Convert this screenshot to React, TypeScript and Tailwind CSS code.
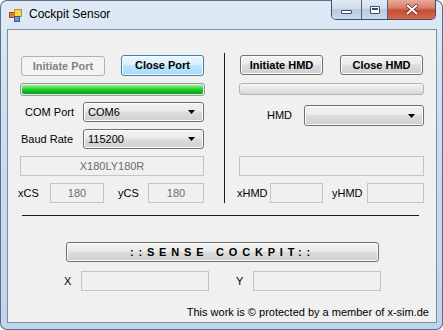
import type { ReactNode } from 'react';

const btnBase =
  'flex items-center justify-center rounded-[3px] border text-[11px] font-bold leading-none shrink-0';
const btnNormal =
  'border-[#707070] bg-[linear-gradient(#f2f2f2,#ebebeb_45%,#dddddd_50%,#cfcfcf)] text-black shadow-[inset_0_0_0_1px_#fcfcfc]';
const btnFocus =
  'border-[#3c7fb1] bg-[linear-gradient(#eaf6fd,#d9f0fc_45%,#bee6fd_50%,#a7d9f5)] text-black shadow-[inset_0_0_0_1px_#f8fcfe]';
const btnDisabled = 'border-[#adb2b5] bg-[#f4f4f4] text-[#838383]';

function Btn({ children, className }: { children: ReactNode; className: string }) {
  return <div className={`${btnBase} ${className}`}>{children}</div>;
}

function Combo({ value, className }: { value?: string; className: string }) {
  return (
    <div
      className={`flex items-center justify-between rounded-[3px] border border-[#707070] bg-[linear-gradient(#f2f2f2,#ebebeb_45%,#dddddd_50%,#cfcfcf)] pl-[4px] pr-[8px] text-[11px] text-black shadow-[inset_0_0_0_1px_#fcfcfc] ${className}`}
    >
      <span>{value}</span>
      <svg width="7" height="4" viewBox="0 0 7 4">
        <path d="M0 0h7L3.5 4z" fill="#000" />
      </svg>
    </div>
  );
}

function TextBox({ value, className }: { value?: string; className: string }) {
  return (
    <div
      className={`flex items-center justify-center border border-[#c4c4c4] bg-[#f0f0f0] text-[11px] text-[#6d6d6d] ${className}`}
    >
      {value}
    </div>
  );
}

function WinIcon() {
  return (
    <svg width="13" height="13" viewBox="0 0 13 13">
      <rect x="0.5" y="3.5" width="5" height="5" fill="#e8743b" stroke="#a64a1c" />
      <rect x="5.5" y="0.5" width="7" height="7" fill="#f7d54a" stroke="#b8901c" />
      <rect x="5.5" y="7.5" width="5" height="5" fill="#6e8fd6" stroke="#3a5b9c" />
    </svg>
  );
}

export default function App() {
  return (
    <div className="relative w-[443px] h-[330px] overflow-hidden rounded-[7px] bg-[linear-gradient(180deg,#dfeaf6,#cddef0_35%,#c0d4eb)] shadow-[inset_0_0_0_1px_#5d6f86] [font-family:'Liberation_Sans',Arial,sans-serif]">
      {/* title bar */}
      <div className="flex h-[29px] items-start">
        <div className="ml-[9px] mt-[9px]">
          <WinIcon />
        </div>
        <span className="ml-[7px] mt-[7px] text-[12px] leading-[15px] text-black">Cockpit Sensor</span>
        <div className="ml-auto mr-[7px] flex h-[20px] overflow-hidden rounded-b-[5px] border border-t-0 border-[#3f4d60]">
          <div className="flex w-[30px] items-center justify-center border-r border-[#52637a] bg-[linear-gradient(#e2ebf5,#cfdcec_45%,#b8cbe2_50%,#c9d9ec)]">
            <div className="mt-[5px] h-[4px] w-[11px] rounded-[1px] border border-[#3c4b5e] bg-white" />
          </div>
          <div className="flex w-[26px] items-center justify-center border-r border-[#52637a] bg-[linear-gradient(#e2ebf5,#cfdcec_45%,#b8cbe2_50%,#c9d9ec)]">
            <div className="h-[8px] w-[10px] rounded-[1px] border border-[#3c4b5e] bg-white p-[1px]">
              <div className="h-full w-full border-t-[2px] border-[#3c4b5e] bg-white" />
            </div>
          </div>
          <div className="flex w-[47px] items-center justify-center bg-[linear-gradient(#e9a99a,#d9826d_40%,#c74d36_55%,#d66a4e)]">
            <svg width="12" height="11" viewBox="0 0 12 11">
              <path d="M1.5 1.5l9 8M10.5 1.5l-9 8" stroke="#5a2418" strokeWidth="3.4" strokeLinecap="round" />
              <path d="M1.5 1.5l9 8M10.5 1.5l-9 8" stroke="#fff" strokeWidth="2" strokeLinecap="round" />
            </svg>
          </div>
        </div>
      </div>

      {/* client area */}
      <div className="ml-[7px] mr-[6px] h-[294px] border border-[#7a8ea6] bg-[#f0f0f0] text-[11px] text-black">
        <div className="flex pl-[12px] pt-[23px]">
          {/* left column */}
          <div className="w-[185px] pt-[2px]">
            <div className="flex h-[21px]">
              <Btn className={`${btnDisabled} ml-[1px] mt-[1px] h-[20px] w-[84px]`}>Initiate Port</Btn>
              <Btn className={`${btnFocus} ml-auto mr-[1px] h-[21px] w-[83px]`}>Close Port</Btn>
            </div>
            <div className="mt-[7px] h-[13px] rounded-[3px] border border-[#9a9a9a] bg-[#e6e6e6] p-[1px]">
              <div className="h-full w-full rounded-[2px] bg-[linear-gradient(#a6efa6,#3bd83b_35%,#0fc21f_65%,#0b9e1c)]" />
            </div>
            <div className="mt-[6px] flex h-[20px] items-center">
              <span className="w-[54px] text-right">COM Port</span>
              <Combo value="COM6" className="ml-[9px] h-[20px] w-[121px]" />
            </div>
            <div className="mt-[7px] flex h-[20px] items-center">
              <span className="w-[53px] text-right">Baud Rate</span>
              <Combo value="115200" className="ml-[10px] h-[20px] w-[121px]" />
            </div>
            <TextBox value="X180LY180R" className="mt-[7px] h-[20px] w-[184px]" />
            <div className="mt-[7px] flex h-[20px] items-center">
              <span className="-ml-[2px] w-[32px]">xCS</span>
              <TextBox value="180" className="h-[20px] w-[54px]" />
              <span className="ml-[14px] w-[30px]">yCS</span>
              <TextBox value="180" className="h-[20px] w-[56px]" />
            </div>
          </div>

          {/* separator */}
          <div className="ml-[19px] h-[150px] w-px bg-[#1a1a1a]" />

          {/* right column */}
          <div className="ml-[12px] w-[187px] pt-[2px]">
            <div className="flex h-[21px]">
              <Btn className={`${btnNormal} ml-[3px] h-[20px] w-[83px]`}>Initiate HMD</Btn>
              <Btn className={`${btnNormal} ml-[17px] h-[20px] w-[83px]`}>Close HMD</Btn>
            </div>
            <div className="ml-[2px] mt-[7px] h-[12px] w-[185px] rounded-[3px] border border-[#b2b2b2] bg-[linear-gradient(#f5f5f5,#e6e6e6_50%,#d6d6d6)]" />
            <div className="mt-[10px] flex h-[21px] items-center justify-end">
              <span className="mr-[12px]">HMD</span>
              <Combo className="h-[21px] w-[120px]" />
            </div>
            <TextBox className="ml-[2px] mt-[30px] h-[20px] w-[185px]" />
            <div className="mt-[7px] flex h-[20px] items-center">
              <span className="w-[33px]">xHMD</span>
              <TextBox className="h-[20px] w-[53px]" />
              <span className="ml-[9px] w-[35px]">yHMD</span>
              <TextBox className="h-[20px] w-[57px]" />
            </div>
          </div>
        </div>

        <div className="ml-[14px] mt-[12px] h-px w-[397px] bg-[#1a1a1a]" />

        <Btn className={`${btnNormal} ml-[58px] mt-[26px] h-[20px] w-[313px] tracking-[4.8px] text-[#111]`}>
          ::SENSE COCKPIT::
        </Btn>

        <div className="mt-[9px] flex h-[20px] items-center">
          <span className="ml-[56px] w-[17px]">X</span>
          <TextBox className="h-[20px] w-[128px]" />
          <span className="ml-[27px] w-[17px]">Y</span>
          <TextBox className="h-[20px] w-[128px]" />
        </div>

        <div className="mt-[15px] flex justify-end pr-[7px] leading-[13px]">
          This work is © protected by a member of x-sim.de
        </div>
      </div>
    </div>
  );
}
